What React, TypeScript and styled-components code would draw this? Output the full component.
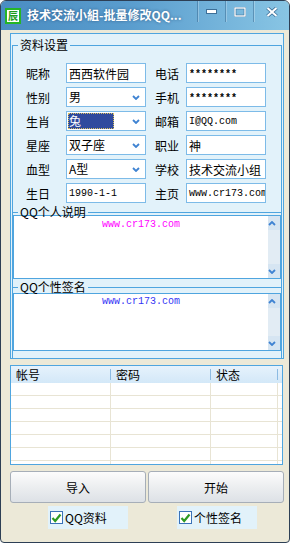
import React from 'react';
import styled, { createGlobalStyle } from 'styled-components';

// Palette taken from the reference
const C = {
    frame: '#2d3f55',
    body: '#ece9d8',
    panel: '#e2f2fa',
    line: '#4fa5df',
    field: '#7dbbe8',
    grid: '#e8e4d4',
    chevron: '#3f83d2',
};

const GlobalStyle = createGlobalStyle`
    html, body { margin: 0; padding: 0; background: #ffffff; }
    body {
        font-family: "Noto Sans CJK SC", "Noto Sans", sans-serif;
        font-size: 12px;
        color: #000;
    }
    * { box-sizing: border-box; }
`;

const Window = styled.div`
    width: 290px;
    height: 543px;
    border: 1px solid ${C.frame};
    border-radius: 6px 6px 4px 4px;
    background: ${C.body};
    display: flex;
    flex-direction: column;
    overflow: hidden;
`;

// ---- title bar ----
const TitleBar = styled.div`
    flex: none;
    height: 29px;
    display: flex;
    align-items: flex-start;
    background: linear-gradient(to right, #4a8dc2 0%, #5a9dce 45%, #88c5e4 100%);
    color: #fff;
`;

const AppIcon = styled.div`
    width: 16px;
    height: 16px;
    margin: 7px 0 0 4px;
    background: #fff;
    border: 2px solid #25b525;
    color: #1e9c1e;
    font-size: 10px;
    line-height: 12px;
    font-weight: bold;
    text-align: center;
`;

const Title = styled.div`
    margin: 7px 0 0 6px;
    font-size: 12px;
    line-height: 14px;
    font-weight: bold;
    white-space: nowrap;
    text-shadow: 0 0 3px rgba(20, 50, 90, 0.6);
`;

const Captions = styled.div`
    margin-left: auto;
    display: flex;
    height: 21px;
`;

const CaptionButton = styled.div<{ $w: number }>`
    width: ${p => p.$w}px;
    height: 100%;
    display: flex;
    align-items: center;
    justify-content: center;
    border-left: 1px solid rgba(30, 70, 110, 0.35);
    box-shadow: inset 1px 0 rgba(255, 255, 255, 0.25);
`;

// ---- body ----
const Body = styled.div`
    flex: 1;
    padding: 3px 5px 0 9px;
    display: flex;
    flex-direction: column;
`;

const Panel = styled.div`
    height: 326px;
    border: 1px solid ${C.line};
    background: ${C.panel};
    padding: 0 1px;
    display: flex;
    flex-direction: column;
`;

const Group = styled.fieldset<{ $overlap?: boolean; $grow?: boolean }>`
    margin: ${p => (p.$overlap ? '-7px' : '4px')} 0 0;
    padding: 0;
    min-width: 0;
    border: 1px solid ${C.line};
    border-bottom: none;
    flex: ${p => (p.$grow ? 1 : 'none')};
`;

const Legend = styled.legend`
    margin-left: 5px;
    padding: 0 2px;
    font-size: 12px;
    line-height: 14px;
`;

const FormGrid = styled.div`
    display: grid;
    grid-template-columns: 40px 80px 40px 80px;
    grid-auto-rows: 20px;
    row-gap: 4px;
    margin: 11px 0 9px 13px;
`;

const Label = styled.div<{ $right?: boolean }>`
    display: flex;
    align-items: center;
    padding-left: ${p => (p.$right ? 9 : 0)}px;
    white-space: nowrap;
`;

const Field = styled.div<{ $mono?: boolean; $bold?: boolean }>`
    height: 20px;
    border: 1px solid ${C.field};
    background: #fff;
    display: flex;
    align-items: center;
    padding-left: 1px;
    overflow: hidden;
    white-space: nowrap;
    font-family: ${p => (p.$mono ? '"Liberation Mono", monospace' : 'inherit')};
    font-size: ${p => (p.$mono ? 10 : 12)}px;
    font-weight: ${p => (p.$bold ? 'bold' : 'normal')};
`;

const FieldText = styled.span<{ $selected?: boolean }>`
    flex: 1;
    height: 16px;
    line-height: 15px;
    padding-left: 1px;
    margin-right: 18px;
    color: ${p => (p.$selected ? '#fff' : '#000')};
    background: ${p => (p.$selected ? '#2f4a9e' : 'transparent')};
    outline: ${p => (p.$selected ? '1px dotted #d8c060' : 'none')};
    outline-offset: -1px;
`;

const Value = styled.span<{ $drop?: number }>`
    padding: ${p => p.$drop ?? 0}px 0 0 1px;
`;

const ChevronBox = styled.svg`
    flex: none;
    margin-right: 5px;
`;

// ---- memo boxes ----
const Memo = styled.div<{ $h: number; $shift: number }>`
    height: ${p => p.$h}px;
    margin-top: ${p => p.$shift}px;
    border: 1px solid ${C.line};
    background: #fff;
    display: flex;
`;

const MemoText = styled.div<{ $color: string; $top: number }>`
    flex: 1;
    padding-top: ${p => p.$top}px;
    text-align: center;
    font-family: "Liberation Mono", monospace;
    font-size: 10px;
    line-height: 12px;
    color: ${p => p.$color};
`;

const ScrollBar = styled.div`
    width: 12px;
    background: #e2ecf4;
    display: flex;
    flex-direction: column;
    justify-content: space-between;
`;

const ScrollArrow = styled.div`
    height: 14px;
    background: #d6e5f2;
    display: flex;
    align-items: center;
    justify-content: center;
`;

const GroupGap = styled.div<{ $h: number }>`
    height: ${p => p.$h}px;
`;

// ---- list view ----
const ListView = styled.div`
    margin-top: 6px;
    width: 273px;
    height: 100px;
    border: 1px solid ${C.line};
    background: #fff;
    overflow: hidden;
`;

const ListRow = styled.div<{ $head?: boolean }>`
    display: grid;
    grid-template-columns: 100px 100px 67px 1fr;
    height: ${p => (p.$head ? 17 : 13)}px;
    background: ${p => (p.$head ? 'linear-gradient(#e6f2fc, #d3e8f8)' : '#fff')};
`;

const HeadCell = styled.div<{ $sep?: boolean }>`
    padding-left: 5px;
    line-height: 17px;
    background: ${p =>
        p.$sep ? 'linear-gradient(#8dbbe2, #8dbbe2) no-repeat right 3px / 1px 11px' : 'none'};
`;

const Cell = styled.div<{ $last?: boolean }>`
    border-bottom: 1px solid ${C.grid};
    border-right: ${p => (p.$last ? 'none' : `1px solid ${C.grid}`)};
`;

// ---- buttons and checks ----
const ButtonRow = styled.div`
    margin-top: 6px;
    display: grid;
    grid-template-columns: 136px 136px;
    gap: 2px;
`;

const ActionButton = styled.button`
    height: 32px;
    border: 1px solid #a6aeb8;
    border-radius: 3px;
    background: linear-gradient(#fcfcfc, #eceef0 50%, #dde1e6);
    font-family: "Noto Sans CJK SC", sans-serif;
    font-size: 12px;
    color: #000;
    padding: 0;
`;

const CheckRow = styled.div`
    margin-top: 3px;
    display: flex;
    gap: 49px;
    padding-left: 38px;
`;

const CheckItem = styled.label`
    width: 80px;
    height: 23px;
    background: ${C.panel};
    display: flex;
    align-items: center;
    gap: 2px;
    padding-left: 2px;
    white-space: nowrap;
`;

const CheckBox = styled.span`
    width: 13px;
    height: 13px;
    border: 1px solid #3a72b8;
    background: #fff;
    display: flex;
    align-items: center;
    justify-content: center;
`;

const Chevron = ({ up }: { up?: boolean }) => (
    <ChevronBox width="8" height="5" viewBox="0 0 8 5">
        <path
            d={up ? 'M1 4 L4 1 L7 4' : 'M1 1 L4 4 L7 1'}
            fill="none"
            stroke={C.chevron}
            strokeWidth="1.8"
        />
    </ChevronBox>
);

const Tick = () => (
    <svg width="11" height="10" viewBox="0 0 11 10">
        <path d="M1.5 5 L4.2 8 L9.5 1.5" fill="none" stroke="#2d9a22" strokeWidth="2.2" />
    </svg>
);

type FieldDef = { label: string; value: string; select?: boolean; mono?: boolean; stars?: boolean; selected?: boolean };

const LEFT: FieldDef[] = [
    { label: '昵称', value: '西西软件园' },
    { label: '性别', value: '男', select: true },
    { label: '生肖', value: '兔', select: true, selected: true },
    { label: '星座', value: '双子座', select: true },
    { label: '血型', value: 'A型', select: true },
    { label: '生日', value: '1990-1-1', mono: true },
];

const RIGHT: FieldDef[] = [
    { label: '电话', value: '********', stars: true },
    { label: '手机', value: '********', stars: true },
    { label: '邮箱', value: 'I@QQ.com', mono: true },
    { label: '职业', value: '神' },
    { label: '学校', value: '技术交流小组' },
    { label: '主页', value: 'www.cr173.com', mono: true },
];

const FormField = ({ f }: { f: FieldDef }) => {
    if (f.select) {
        return (
            <Field>
                <FieldText $selected={f.selected}>{f.value}</FieldText>
                <Chevron />
            </Field>
        );
    }
    if (f.stars) {
        return (
            <Field $mono $bold>
                <Value $drop={3}>{f.value}</Value>
            </Field>
        );
    }
    return (
        <Field $mono={f.mono}>
            <Value>{f.value}</Value>
        </Field>
    );
};

const ScrollTrack = () => (
    <ScrollBar>
        <ScrollArrow><Chevron up /></ScrollArrow>
        <ScrollArrow><Chevron /></ScrollArrow>
    </ScrollBar>
);

export default function App() {
    const rows = Array.from({ length: 7 });

    return (
        <>
            <GlobalStyle />
            <Window>
                <TitleBar>
                    <AppIcon>辰</AppIcon>
                    <Title>技术交流小組-批量修改QQ...</Title>
                    <Captions>
                        <CaptionButton $w={28}>
                            <svg width="11" height="5" viewBox="0 0 11 5">
                                <rect x="0.5" y="0.5" width="10" height="4" fill="#fff" stroke="#3d6f98" strokeWidth="1" />
                            </svg>
                        </CaptionButton>
                        <CaptionButton $w={28}>
                            <svg width="12" height="10" viewBox="0 0 12 10">
                                <rect x="1" y="1" width="10" height="8" fill="none" stroke="#3d6f98" strokeWidth="2.6" />
                                <rect x="1" y="1" width="10" height="8" fill="none" stroke="#fff" strokeWidth="1.4" />
                            </svg>
                        </CaptionButton>
                        <CaptionButton $w={36}>
                            <svg width="12" height="10" viewBox="0 0 12 10">
                                <path d="M1.5 1 L10.5 9 M10.5 1 L1.5 9" stroke="#3d6f98" strokeWidth="3.6" />
                                <path d="M1.5 1 L10.5 9 M10.5 1 L1.5 9" stroke="#fff" strokeWidth="2" />
                            </svg>
                        </CaptionButton>
                    </Captions>
                </TitleBar>

                <Body>
                    <Panel>
                        <Group>
                            <Legend>资料设置</Legend>
                            <FormGrid>
                                {LEFT.map((l, i) => (
                                    <React.Fragment key={l.label}>
                                        <Label>{l.label}</Label>
                                        <FormField f={l} />
                                        <Label $right>{RIGHT[i].label}</Label>
                                        <FormField f={RIGHT[i]} />
                                    </React.Fragment>
                                ))}
                            </FormGrid>
                        </Group>

                        <Group $overlap>
                            <Legend>QQ个人说明</Legend>
                            <Memo $h={64} $shift={-4}>
                                <MemoText $color="#ff00ff" $top={3}>www.cr173.com</MemoText>
                                <ScrollTrack />
                            </Memo>
                            <GroupGap $h={8} />
                        </Group>

                        <Group $overlap $grow>
                            <Legend>QQ个性签名</Legend>
                            <Memo $h={58} $shift={-1}>
                                <MemoText $color="#3535f5" $top={2}>www.cr173.com</MemoText>
                                <ScrollTrack />
                            </Memo>
                        </Group>
                    </Panel>

                    <ListView>
                        <ListRow $head>
                            <HeadCell $sep>帐号</HeadCell>
                            <HeadCell $sep>密码</HeadCell>
                            <HeadCell $sep>状态</HeadCell>
                            <HeadCell />
                        </ListRow>
                        {rows.map((_, i) => (
                            <ListRow key={i}>
                                <Cell />
                                <Cell />
                                <Cell />
                                <Cell $last />
                            </ListRow>
                        ))}
                    </ListView>

                    <ButtonRow>
                        <ActionButton>导入</ActionButton>
                        <ActionButton>开始</ActionButton>
                    </ButtonRow>

                    <CheckRow>
                        <CheckItem>
                            <CheckBox><Tick /></CheckBox>
                            QQ资料
                        </CheckItem>
                        <CheckItem>
                            <CheckBox><Tick /></CheckBox>
                            个性签名
                        </CheckItem>
                    </CheckRow>
                </Body>
            </Window>
        </>
    );
}
